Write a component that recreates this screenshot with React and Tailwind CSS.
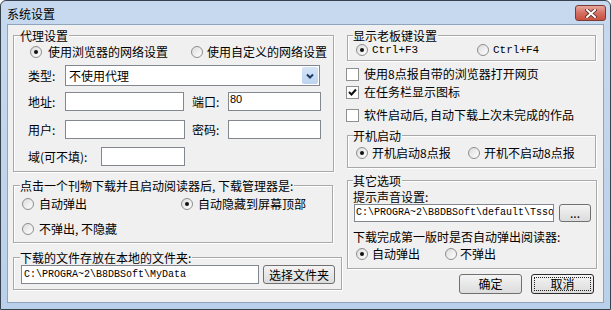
import React from 'react';

const Radio = ({ checked }) => (
  <span className="w-[12px] h-[12px] shrink-0 rounded-full border border-[#8d8d8d] bg-gradient-to-br from-[#dcdcdc] to-white flex items-center justify-center">
    {checked && <span className="w-[4px] h-[4px] rounded-full bg-[#111]" />}
  </span>
);

const Check = ({ checked }) => (
  <span className="w-[13px] h-[13px] shrink-0 border border-[#8e8f8f] bg-white flex items-center justify-center">
    {checked && (
      <svg width="9" height="9" viewBox="0 0 9 9">
        <path d="M1 4 L3.5 6.5 L8 1.5" fill="none" stroke="#111" strokeWidth="2" />
      </svg>
    )}
  </span>
);

const Input = ({ className, children }) => (
  <div className={`shrink-0 border border-[#828790] bg-white overflow-hidden whitespace-nowrap ${className}`}>
    {children}
  </div>
);

const Button = ({ className, children }) => (
  <div className={`shrink-0 rounded-[3px] border bg-gradient-to-b from-[#f4f4f4] to-[#dcdcdc] flex items-center justify-center whitespace-nowrap ${className}`}>
    {children}
  </div>
);

const Group = ({ title, className, children }) => (
  <fieldset className={`border border-[#a9a9a9] shadow-[inset_1px_1px_0_#fff,1px_1px_0_#fff] ${className}`}>
    <legend className="pr-[1px] leading-[13px] bg-[#f0f0f0] whitespace-nowrap">{title}</legend>
    {children}
  </fieldset>
);

const App = () => {
  return (
    <div className="w-[611px] h-[310px] bg-white font-['Noto_Sans_CJK_SC',sans-serif] text-[12px] leading-[14px] text-black whitespace-nowrap">
      <div className="w-full h-full rounded-t-[6px] border border-[#38424f] bg-gradient-to-b from-[#c7d9ee] to-[#bad0ea] flex flex-col">
        {/* Title bar */}
        <div className="h-[23px] shrink-0 flex items-start justify-between pl-[6px] pr-[4px]">
          <span className="mt-[6px] text-[12px] leading-[14px]">系统设置</span>
          <div className="mt-[4px] w-[31px] h-[16px] rounded-[3px] border border-[#7a3a35] bg-gradient-to-b from-[#e8a69c] via-[#d46f62] to-[#c9503f] flex items-center justify-center">
            <svg width="12" height="9" viewBox="0 0 12 9">
              <path d="M2 1 L10 8 M10 1 L2 8" stroke="#5a2a26" strokeWidth="3.6" strokeLinecap="square" />
              <path d="M2 1 L10 8 M10 1 L2 8" stroke="#fff" strokeWidth="2" strokeLinecap="square" />
            </svg>
          </div>
        </div>

        {/* Content */}
        <div className="flex-1 mx-[6px] mb-[6px] border border-[#8fa4bd] bg-[#f0f0f0] flex items-start pt-[4px]">
          {/* Left column */}
          <div className="ml-[5px] w-[325px] flex flex-col">
            <Group title="代理设置" className="w-[320px] px-[6px] pt-[3px] pb-[5px]">
              <div className="h-[14px] ml-[10px] flex items-center">
                <div className="w-[161px] shrink-0 flex items-center gap-[6px]">
                  <Radio checked />
                  <span>使用浏览器的网络设置</span>
                </div>
                <div className="shrink-0 flex items-center gap-[4px]">
                  <Radio />
                  <span>使用自定义的网络设置</span>
                </div>
              </div>
              <div className="mt-[6px] ml-[8px] h-[21px] flex items-center">
                <span className="w-[37px]">类型:</span>
                <div className="w-[255px] h-[21px] border border-[#828790] bg-white flex items-center justify-between pl-[3px] pr-[1px]">
                  <span>不使用代理</span>
                  <div className="w-[16px] h-[17px] rounded-[2px] bg-gradient-to-b from-[#d6e5f7] to-[#bcd3f0] flex items-center justify-center">
                    <svg width="8" height="6" viewBox="0 0 8 6">
                      <path d="M1 1.5 L4 4.5 L7 1.5" fill="none" stroke="#1f3a60" strokeWidth="2" />
                    </svg>
                  </div>
                </div>
              </div>
              <div className="mt-[6px] ml-[8px] h-[19px] flex items-center">
                <span className="w-[37px]">地址:</span>
                <Input className="w-[119px] h-[19px]" />
                <span className="ml-[8px] w-[36px]">端口:</span>
                <Input className="w-[93px] h-[19px] pl-[1px] font-['Liberation_Sans',sans-serif] text-[11px] leading-[12px]">80</Input>
              </div>
              <div className="mt-[9px] ml-[8px] h-[19px] flex items-center">
                <span className="w-[37px]">用户:</span>
                <Input className="w-[120px] h-[19px]" />
                <span className="ml-[7px] w-[36px]">密码:</span>
                <Input className="w-[93px] h-[19px]" />
              </div>
              <div className="mt-[8px] ml-[8px] h-[19px] flex items-center">
                <span className="w-[73px]">域(可不填):</span>
                <Input className="w-[84px] h-[19px]" />
              </div>
            </Group>

            <Group title="点击一个刊物下载并且启动阅读器后, 下载管理器是:" className="mt-[7px] w-[320px] px-[6px] pt-[5px] pb-[6px]">
              <div className="h-[14px] ml-[2px] flex items-center">
                <div className="w-[159px] flex items-center gap-[5px]">
                  <Radio />
                  <span>自动弹出</span>
                </div>
                <div className="flex items-center gap-[5px]">
                  <Radio checked />
                  <span>自动隐藏到屏幕顶部</span>
                </div>
              </div>
              <div className="mt-[11px] h-[14px] ml-[2px] flex items-center gap-[5px]">
                <Radio />
                <span>不弹出, 不隐藏</span>
              </div>
            </Group>

            <Group title="下载的文件存放在本地的文件夹:" className="mt-[8px] w-[325px] px-[6px] pt-[1px] pb-[5px]">
              <div className="ml-[1px] flex items-center">
                <Input className="w-[238px] h-[19px] pl-[2px] font-['Liberation_Mono',monospace] text-[10px] leading-[17px]">
                  C:\PROGRA~2\B8DBSoft\MyData
                </Input>
                <Button className="ml-[4px] w-[72px] h-[19px] border-[#707070]">选择文件夹</Button>
              </div>
            </Group>
          </div>

          {/* Right column */}
          <div className="ml-[8px] w-[250px] flex flex-col">
            <Group title="显示老板键设置" className="ml-[1px] w-[249px] pl-[5px] pr-[5px] pt-[1px] pb-[3px]">
              <div className="h-[14px] ml-[3px] flex items-center font-['Liberation_Mono',monospace] text-[11px]">
                <div className="w-[121px] flex items-center gap-[4px]">
                  <Radio checked />
                  <span>Ctrl+F3</span>
                </div>
                <div className="flex items-center gap-[4px]">
                  <Radio />
                  <span>Ctrl+F4</span>
                </div>
              </div>
            </Group>

            <div className="mt-[6px] h-[14px] flex items-center gap-[5px]">
              <Check />
              <span>使用8点报自带的浏览器打开网页</span>
            </div>
            <div className="mt-[4px] h-[14px] flex items-center gap-[5px]">
              <Check checked />
              <span>在任务栏显示图标</span>
            </div>
            <div className="mt-[9px] h-[14px] flex items-center gap-[5px]">
              <Check />
              <span>软件启动后, 自动下载上次未完成的作品</span>
            </div>

            <Group title="开机启动" className="mt-[7px] ml-[1px] w-[249px] px-[5px] pt-[4px] pb-[7px]">
              <div className="h-[14px] ml-[3px] flex items-center">
                <div className="w-[112px] flex items-center gap-[4px]">
                  <Radio checked />
                  <span>开机启动8点报</span>
                </div>
                <div className="flex items-center gap-[4px]">
                  <Radio />
                  <span>开机不启动8点报</span>
                </div>
              </div>
            </Group>

            <Group title="其它选项" className="mt-[6px] ml-[1px] w-[249px] px-[5px] pt-[3px] pb-[7px]">
              <div className="h-[14px] flex items-center">提示声音设置:</div>
              <div className="ml-[1px] flex items-center">
                <Input className="w-[200px] h-[18px] pl-[1px] font-['Liberation_Mono',monospace] text-[10px] leading-[16px]">
                  C:\PROGRA~2\B8DBSoft\default\Tsso
                </Input>
                <Button className="ml-[5px] w-[32px] h-[18px] border-[#707070] leading-[10px]">...</Button>
              </div>
              <div className="mt-[8px] h-[14px] flex items-center">下载完成第一版时是否自动弹出阅读器:</div>
              <div className="mt-[3px] h-[14px] ml-[3px] flex items-center">
                <div className="w-[89px] flex items-center gap-[4px]">
                  <Radio checked />
                  <span>自动弹出</span>
                </div>
                <div className="flex items-center gap-[3px]">
                  <Radio />
                  <span>不弹出</span>
                </div>
              </div>
            </Group>

            <div className="mt-[5px] pr-[2px] flex justify-end gap-[9px]">
              <Button className="w-[63px] h-[20px] border-[#707070]">确定</Button>
              <Button className="w-[63px] h-[20px] border-[#2b2b2b] p-[2px]">
                <div className="w-full h-full border border-dotted border-[#222] flex items-center justify-center">取消</div>
              </Button>
            </div>
          </div>
        </div>
      </div>
    </div>
  );
};

export default App;
